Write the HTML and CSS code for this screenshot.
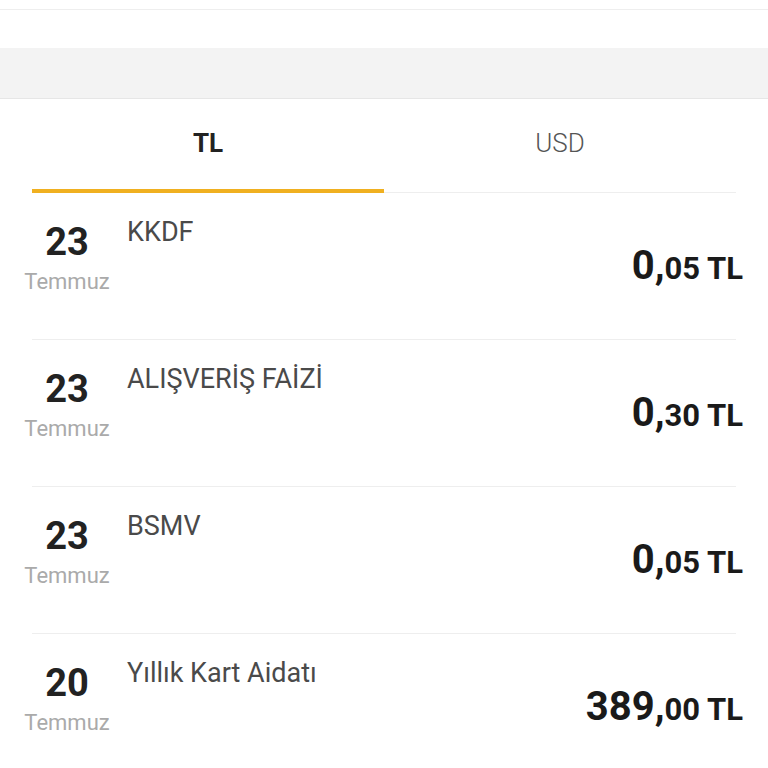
FILE: index.html
```html
<!doctype html>
<html>
<head>
<meta charset="utf-8">
<title>Hesap Hareketleri</title>
<link rel="stylesheet" href="styles.css">
</head>
<body>
<div class="topbar"></div>
<div class="spacer"></div>
<div class="band"></div>

<div class="tabs">
	<div class="tab active">TL</div>
	<div class="tab">USD</div>
</div>

<ul class="list">
	<li class="row">
		<div class="date"><span class="day">23</span><span class="month">Temmuz</span></div>
		<div class="title">KKDF</div>
		<div class="amount"><span class="int">0,</span><span class="dec">05 TL</span></div>
	</li>
	<li class="row">
		<div class="date"><span class="day">23</span><span class="month">Temmuz</span></div>
		<div class="title">ALIŞVERİŞ FAİZİ</div>
		<div class="amount"><span class="int">0,</span><span class="dec">30 TL</span></div>
	</li>
	<li class="row">
		<div class="date"><span class="day">23</span><span class="month">Temmuz</span></div>
		<div class="title">BSMV</div>
		<div class="amount"><span class="int">0,</span><span class="dec">05 TL</span></div>
	</li>
	<li class="row">
		<div class="date"><span class="day">20</span><span class="month">Temmuz</span></div>
		<div class="title">Yıllık Kart Aidatı</div>
		<div class="amount"><span class="int">389,</span><span class="dec">00 TL</span></div>
	</li>
</ul>
</body>
</html>
```

FILE: styles.css
```css
*{margin:0;padding:0;box-sizing:border-box}
body{background:#fff;font-family:Roboto,"Noto Sans",Arial,sans-serif;overflow:hidden}

.topbar{height:10px;border-bottom:1px solid #eee}
.spacer{height:38px}
.band{height:51px;background:#f3f3f3;border-bottom:1px solid #e6e6e6}

.tabs{display:flex;margin:0 32px}
.tab{flex:1;height:94px;padding-top:31px;text-align:center;font-size:26px;line-height:26px;font-weight:300;color:#555;border-bottom:1px solid #eee}
.tab.active{font-weight:bold;color:#222;border-bottom:4px solid #f0b020}

.list{list-style:none}
.row{display:flex;align-items:flex-start;height:147px;margin:0 32px;padding-top:30px;border-bottom:1px solid #eee}
.row:last-child{border-bottom:0}
.date{width:70px;display:flex;flex-direction:column;align-items:center}
.day{font-size:38px;line-height:38px;font-weight:bold;color:#222}
.month{margin-top:10px;font-size:22px;line-height:22px;color:#aaa;white-space:nowrap}
.title{flex:1;margin-left:25px;margin-top:-4px;font-size:27px;line-height:27px;color:#4a4a4a}
.amount{margin-top:23px;margin-right:-7px;font-weight:bold;color:#1a1a1a;line-height:40px;white-space:nowrap}
.amount .int{font-size:40px}
.amount .dec{font-size:31px}
```
